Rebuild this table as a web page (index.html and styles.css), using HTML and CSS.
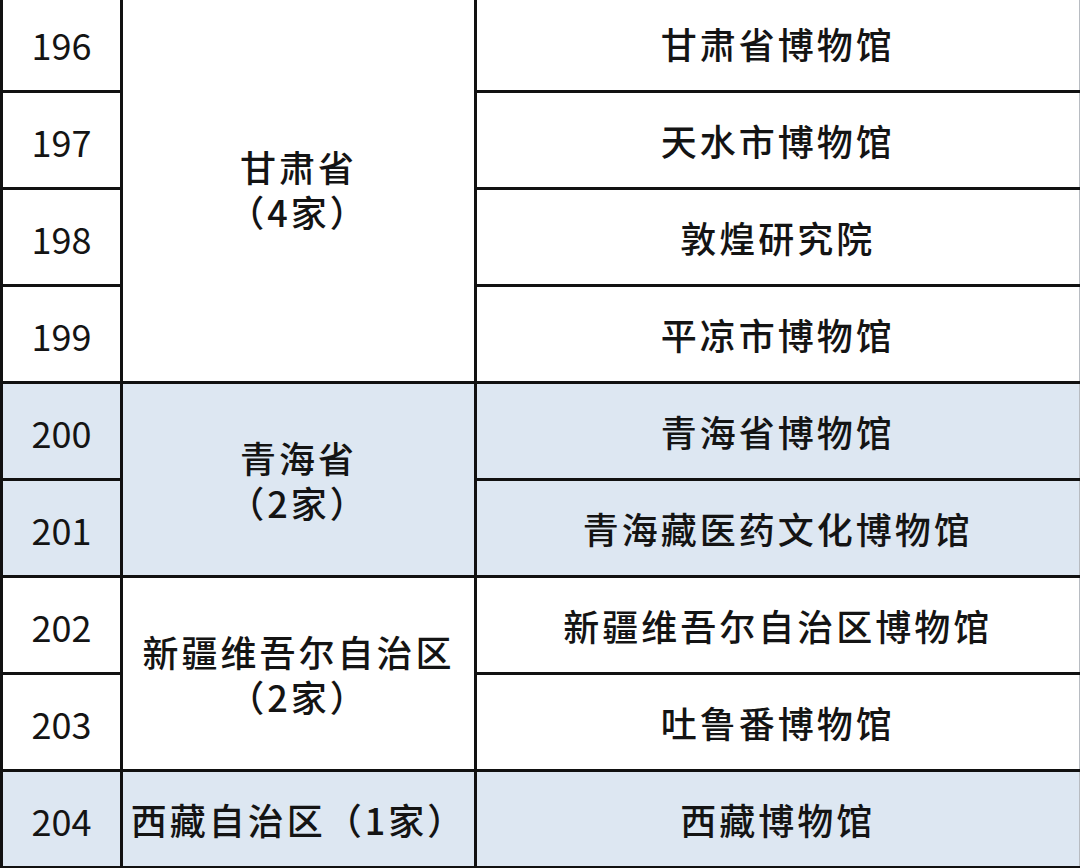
FILE: index.html
```html
<!DOCTYPE html>
<html lang="zh">
<head>
<meta charset="utf-8">
<link rel="stylesheet" href="styles.css">
</head>
<body>
<div class="frame">
<table class="list">
  <colgroup><col class="c1"><col class="c2"><col class="c3"></colgroup>
  <tbody>
    <tr><td class="num">196</td><td class="prov" rowspan="4">甘肃省<br>（4家）</td><td class="name">甘肃省博物馆</td></tr>
    <tr><td class="num">197</td><td class="name">天水市博物馆</td></tr>
    <tr><td class="num">198</td><td class="name">敦煌研究院</td></tr>
    <tr><td class="num">199</td><td class="name">平凉市博物馆</td></tr>
    <tr class="blue"><td class="num">200</td><td class="prov" rowspan="2">青海省<br>（2家）</td><td class="name">青海省博物馆</td></tr>
    <tr class="blue"><td class="num">201</td><td class="name">青海藏医药文化博物馆</td></tr>
    <tr><td class="num">202</td><td class="prov" rowspan="2">新疆维吾尔自治区<br>（2家）</td><td class="name">新疆维吾尔自治区博物馆</td></tr>
    <tr><td class="num">203</td><td class="name">吐鲁番博物馆</td></tr>
    <tr class="blue"><td class="num">204</td><td class="prov">西藏自治区（1家）</td><td class="name">西藏博物馆</td></tr>
  </tbody>
</table>
</div>
</body>
</html>
```
FILE: styles.css
```css
html, body {
  margin: 0;
  padding: 0;
  background: #ffffff;
}
.frame {
  width: 1080px;
  height: 868px;
  overflow: hidden;
}
.list {
  margin-top: -7px;
  border-collapse: collapse;
  table-layout: fixed;
  width: 1078px;
  font-family: "Noto Sans CJK SC", "Noto Sans", sans-serif;
  font-size: 36px;
  font-weight: 500;
  color: #141414;
  letter-spacing: 3px;
}
.c1 { width: 120px; }
.c2 { width: 354px; }
.c3 { width: 604px; }
.list td {
  border: 3px solid #111111;
  height: 91px;
  padding: 0;
  text-align: center;
  vertical-align: middle;
  line-height: 45px;
}
.list td.name { border-right-color: #b8bcc2; border-right-width: 2px; padding-top: 1px; }
.list td.num { letter-spacing: 0; font-weight: 400; padding-top: 3px; }
.list td.prov { padding-top: 0; }
.blue td { background: #dde7f2; }
```
